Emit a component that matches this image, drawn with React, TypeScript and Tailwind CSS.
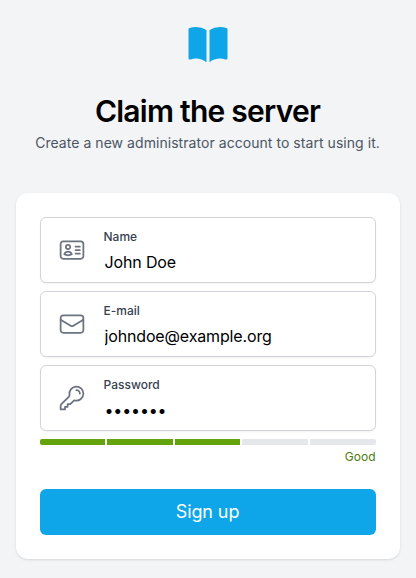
import React from "react";

function IdIcon() {
  return (
    <path d="M15 9h3.75M15 12h3.75M15 15h3.75M4.5 19.5h15a2.25 2.25 0 0 0 2.25-2.25V6.75A2.25 2.25 0 0 0 19.5 4.5h-15a2.25 2.25 0 0 0-2.25 2.25v10.5A2.25 2.25 0 0 0 4.5 19.5Zm6-10.125a1.875 1.875 0 1 1-3.75 0 1.875 1.875 0 0 1 3.75 0Zm1.294 6.336a6.721 6.721 0 0 1-3.17.789 6.721 6.721 0 0 1-3.168-.789 3.376 3.376 0 0 1 6.338 0Z" />
  );
}

function MailIcon() {
  return (
    <path d="M21.75 6.75v10.5a2.25 2.25 0 0 1-2.25 2.25h-15a2.25 2.25 0 0 1-2.25-2.25V6.75m19.5 0A2.25 2.25 0 0 0 19.5 4.5h-15a2.25 2.25 0 0 0-2.25 2.25m19.5 0v.243a2.25 2.25 0 0 1-1.07 1.916l-7.5 4.615a2.25 2.25 0 0 1-2.36 0L3.32 8.91a2.25 2.25 0 0 1-1.07-1.916V6.75" />
  );
}

function KeyIcon() {
  return (
    <path d="M15.75 5.25a3 3 0 0 1 3 3m3 0a6 6 0 0 1-7.029 5.912c-.563-.097-1.159.026-1.563.43L10.5 17.25H8.25v2.25H6v2.25H2.25v-2.818c0-.597.237-1.17.659-1.591l6.499-6.499c.404-.404.527-1 .43-1.563A6 6 0 1 1 21.75 8.25Z" />
  );
}

function Field({ label, value, type, children }: { label: string; value: string; type: string; children: React.ReactNode }) {
  return (
    <label className="flex h-[66px] items-center rounded-md border border-[#d1d5db] bg-white pl-[17px] shadow-xs">
      <svg className="size-7 shrink-0 text-[#6b7280]" viewBox="0 0 24 24" fill="none" stroke="currentColor" strokeWidth="1.5" strokeLinecap="round" strokeLinejoin="round">
        {children}
      </svg>
      <span className="ml-[17.5px] flex min-w-0 flex-1 flex-col">
        <span className="mt-[3px] text-xs leading-4 font-medium text-[#374151]">{label}</span>
        <input className="mt-[5px] ml-px h-6 w-full bg-transparent p-0 text-base leading-6 tracking-[-0.15px] text-black outline-none" type={type} defaultValue={value} />
      </span>
    </label>
  );
}

export default function App() {
  return (
    <main className="h-[578px] w-[416px] bg-[#f3f4f6] px-4 pt-[21px] font-['Inter',sans-serif]">
      <svg className="mx-auto size-12 text-[#0ea5e9]" viewBox="0 0 24 24" fill="currentColor">
        <path d="M11.25 4.533A9.707 9.707 0 0 0 6 3a9.735 9.735 0 0 0-3.25.555.75.75 0 0 0-.5.707v14.25a.75.75 0 0 0 1 .707A8.237 8.237 0 0 1 6 18.75c1.995 0 3.823.707 5.25 1.886V4.533ZM12.75 20.636A8.214 8.214 0 0 1 18 18.75c.966 0 1.89.166 2.75.47a.75.75 0 0 0 1-.708V4.262a.75.75 0 0 0-.5-.707A9.735 9.735 0 0 0 18 3a9.707 9.707 0 0 0-5.25 1.533v16.103Z" />
      </svg>
      <h1 className="mt-6 pr-px text-center text-3xl leading-9 font-semibold tracking-tight text-black">Claim the server</h1>
      <p className="mt-1 pr-px text-center text-sm leading-5 tracking-[0.05px] text-[#4b5563]">Create a new administrator account to start using it.</p>
      <section className="mt-10 h-[366px] rounded-xl bg-white p-6 shadow-sm">
        <div className="flex flex-col gap-2">
          <Field label="Name" value="John Doe" type="text"><IdIcon /></Field>
          <Field label="E-mail" value="johndoe@example.org" type="text"><MailIcon /></Field>
          <Field label="Password" value="johndoe" type="password"><KeyIcon /></Field>
        </div>
        <div className="mt-2 grid grid-cols-[65px_66px_65px_66px_66px] gap-0.5 overflow-hidden rounded-xs">
          <span className="h-1.5 bg-[#65a30d]" />
          <span className="h-1.5 bg-[#65a30d]" />
          <span className="h-1.5 bg-[#65a30d]" />
          <span className="h-1.5 bg-[#e5e7eb]" />
          <span className="h-1.5 bg-[#e5e7eb]" />
        </div>
        <p className="mt-1 pr-[0.5px] text-right text-xs leading-4 text-[#4d7c0f]">Good</p>
        <button className="mt-6 h-[46px] w-full rounded-md bg-[#0ea5e9] pr-px text-lg tracking-[-0.1px] text-white" type="button">Sign up</button>
      </section>
    </main>
  );
}
